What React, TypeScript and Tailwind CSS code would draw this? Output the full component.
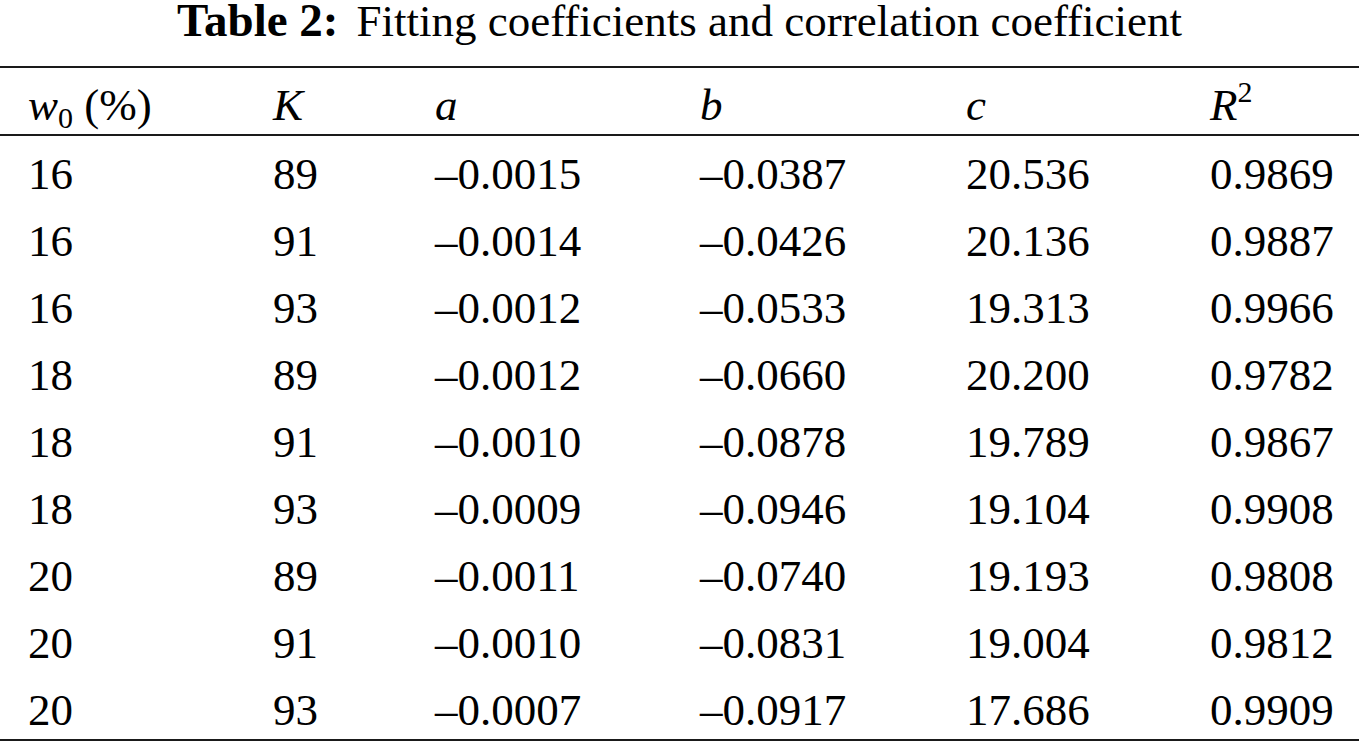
import React from 'react';

type Row = [string, string, string, string, string, string];

const ROWS: Row[] = [
  ['16', '89', '–0.0015', '–0.0387', '20.536', '0.9869'],
  ['16', '91', '–0.0014', '–0.0426', '20.136', '0.9887'],
  ['16', '93', '–0.0012', '–0.0533', '19.313', '0.9966'],
  ['18', '89', '–0.0012', '–0.0660', '20.200', '0.9782'],
  ['18', '91', '–0.0010', '–0.0878', '19.789', '0.9867'],
  ['18', '93', '–0.0009', '–0.0946', '19.104', '0.9908'],
  ['20', '89', '–0.0011', '–0.0740', '19.193', '0.9808'],
  ['20', '91', '–0.0010', '–0.0831', '19.004', '0.9812'],
  ['20', '93', '–0.0007', '–0.0917', '17.686', '0.9909'],
];

// fixed column widths, measured off the reference
const COLS = ['w-[245px]', 'w-[162px]', 'w-[265px]', 'w-[266px]', 'w-[244px]', 'flex-1'];

const App: React.FC = () => {
  return (
    <div className="w-[1359px] h-[742px] bg-white text-black overflow-hidden" style={{ fontFamily: '"Liberation Serif", "Times New Roman", serif' }}>
      <div className="h-[66px] pt-[1px] text-center text-[45px] leading-[38px] whitespace-nowrap">
        <span className="font-bold text-[47px]">Table 2:</span>
        <span className="ml-[18px]">Fitting coefficients and correlation coefficient</span>
      </div>

      <div className="h-[2px] bg-[#1a1a1a]" />

      <div className="flex h-[66px] pt-[10px] pl-[28px] text-[45px] leading-[55px] italic">
        <div className={COLS[0]}>
          w<sub className="not-italic text-[30px] align-baseline relative top-[8px]">0</sub>
          <span className="not-italic"> (%)</span>
        </div>
        <div className={COLS[1]}>K</div>
        <div className={COLS[2]}>a</div>
        <div className={COLS[3]}>b</div>
        <div className={COLS[4]}>c</div>
        <div className={COLS[5]}>
          R<sup className="not-italic text-[30px] align-baseline relative top-[-18px]">2</sup>
        </div>
      </div>

      <div className="h-[2px] bg-[#1a1a1a]" />

      {ROWS.map((row, i) => (
        <div key={i} className="flex h-[67px] pt-[10px] pl-[28px] text-[45px] leading-[57px]">
          {row.map((cell, j) => (
            <div key={j} className={COLS[j]}>{cell}</div>
          ))}
        </div>
      ))}

      <div className="h-[2px] bg-[#1a1a1a]" />
    </div>
  );
};

export default App;
